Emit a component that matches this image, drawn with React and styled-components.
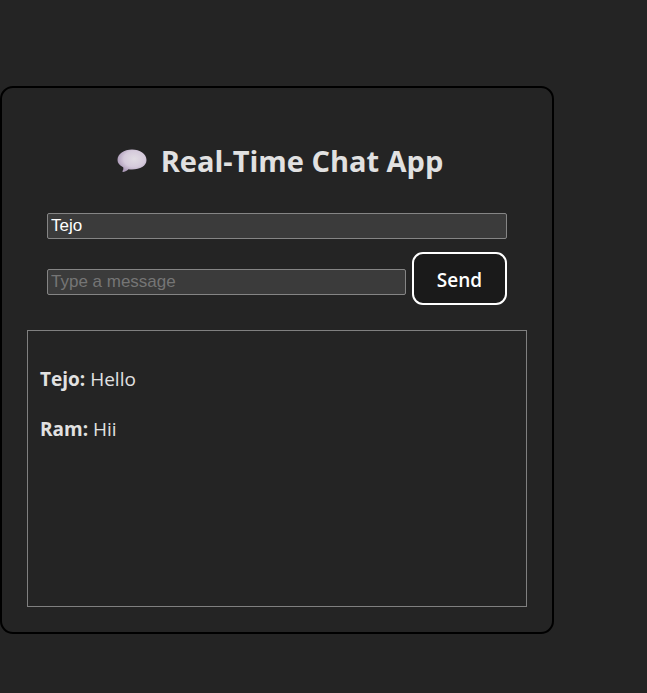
import React, { useState } from "react";
import styled, { createGlobalStyle } from "styled-components";

const GlobalStyle = createGlobalStyle`
  *, *::before, *::after { box-sizing: border-box; }
  body {
    margin: 0;
    background: #242424;
    color: #e1e1e1;
    font-family: "Segoe UI", "Open Sans", "Noto Sans", sans-serif;
    font-size: 19px;
    line-height: 30px;
  }
`;

const Page = styled.main`
  min-height: 100vh;
  padding: 86px 93px 60px 0;
`;

const Card = styled.section`
  border: 2px solid #000;
  border-radius: 13px;
  padding: 49px 25px 25px;
`;

const Title = styled.h2`
  display: flex;
  align-items: center;
  justify-content: center;
  gap: 14px;
  margin: 0 0 28px;
  padding-left: 6px;
  font-size: 29px;
  line-height: 48px;
  font-weight: 700;
  white-space: nowrap;
`;

const Fields = styled.form`
  display: grid;
  gap: 13px;
  padding: 0 20px;
  margin-bottom: 25px;
`;

const MessageRow = styled.div`
  display: flex;
  align-items: center;
  gap: 6px;
`;

const TextField = styled.input`
  width: 100%;
  min-width: 0;
  height: 26px;
  padding: 1px 3px;
  border: 1px solid #858585;
  border-radius: 2px;
  background: #3b3b3b;
  color: #fff;
  font: 17px "Liberation Sans", Arial, sans-serif;
  outline: none;

  &::placeholder {
    color: #757575;
    opacity: 1;
  }
`;

const MessageField = styled(TextField)`
  flex: 1;
  margin-top: 6px;
`;

const SendButton = styled.button`
  flex: none;
  width: 95px;
  height: 53px;
  padding: 2px 0 0;
  border: 2px solid #fff;
  border-radius: 11px;
  background: #1a1a1a;
  color: #fff;
  font: inherit;
  font-weight: 600;
  cursor: pointer;
`;

const Messages = styled.div`
  min-height: 277px;
  padding: 33px 12px;
  border: 1px solid #808080;
`;

const Message = styled.p`
  margin: 0 0 20px;
`;

function SpeechBubble() {
  return (
    <svg width="30" height="24" viewBox="0 0 30 24" aria-hidden="true">
      <defs>
        <radialGradient id="bubble" cx="0.58" cy="0.42" r="0.6">
          <stop offset="0" stopColor="#e1dce3" />
          <stop offset="0.6" stopColor="#d5cadb" />
          <stop offset="1" stopColor="#ad9bb9" />
        </radialGradient>
      </defs>
      <path
        d="M15 0.500C23 0.500 29.500 5 29.500 11C29.500 17 23 20.500 15 20.500C13.500 20.500 12.500 20.500 11.500 20.300C9.500 22 7.500 22.900 6 22.900C5.300 22.900 5.300 22.200 5.800 21.500C6.500 20.500 6.400 19.500 6.200 18.300C2.500 16.500 0.500 14 0.500 11C0.500 5 7 0.500 15 0.500Z"
        fill="url(#bubble)"
      />
    </svg>
  );
}

export default function App() {
  const [name, setName] = useState("Tejo");
  const [draft, setDraft] = useState("");
  const [messages, setMessages] = useState([
    { name: "Tejo", text: "Hello" },
    { name: "Ram", text: "Hii" },
  ]);

  const send = (event) => {
    event.preventDefault();
    if (!draft.trim()) return;
    setMessages([...messages, { name, text: draft }]);
    setDraft("");
  };

  return (
    <>
      <GlobalStyle />
      <Page>
        <Card>
          <Title>
            <SpeechBubble />
            Real-Time Chat App
          </Title>
          <Fields onSubmit={send}>
            <TextField
              aria-label="Your name"
              value={name}
              onChange={(event) => setName(event.target.value)}
            />
            <MessageRow>
              <MessageField
                aria-label="Message"
                placeholder="Type a message"
                value={draft}
                onChange={(event) => setDraft(event.target.value)}
              />
              <SendButton type="submit">Send</SendButton>
            </MessageRow>
          </Fields>
          <Messages>
            {messages.map((message, index) => (
              <Message key={index}>
                <strong>{message.name}:</strong> {message.text}
              </Message>
            ))}
          </Messages>
        </Card>
      </Page>
    </>
  );
}
